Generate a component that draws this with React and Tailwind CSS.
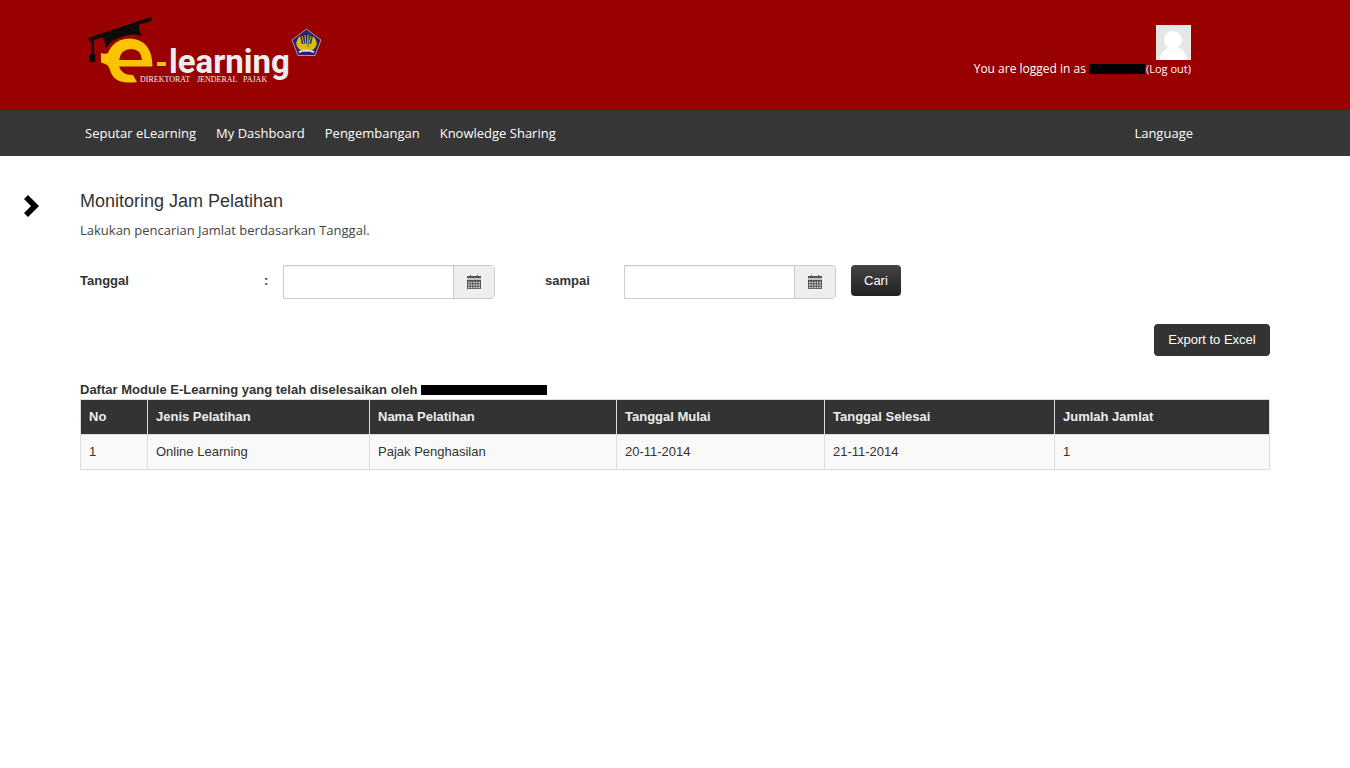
import React, { useState } from "react";

const menu = [
  "Seputar eLearning",
  "My Dashboard",
  "Pengembangan",
  "Knowledge Sharing",
];

const columns = [
  { title: "No", width: "w-[67px]" },
  { title: "Jenis Pelatihan", width: "w-[222px]" },
  { title: "Nama Pelatihan", width: "w-[247px]" },
  { title: "Tanggal Mulai", width: "w-[208px]" },
  { title: "Tanggal Selesai", width: "w-[230px]" },
  { title: "Jumlah Jamlat", width: "w-[215px]" },
];

const rows = [
  ["1", "Online Learning", "Pajak Penghasilan", "20-11-2014", "21-11-2014", "1"],
];

const App = () => {
  return (
    <div className="font-['Liberation_Sans',Arial,sans-serif] text-[13px] leading-[18px] text-[#333]">
      <Header />
      <Navbar />

      <div className="flex pt-[34px] pr-20">
        <aside className="w-20 shrink-0 pt-1 pl-6">
          <button aria-label="Show sidebar" className="block">
            <svg width="16" height="24" viewBox="0 0 16 24" aria-hidden="true">
              <path d="M0 5 4 1 15 12 4 23 0 19 7 12Z" fill="#000" />
            </svg>
          </button>
        </aside>

        <main className="min-w-0 flex-1">
          <h1 className="text-lg leading-[22px]">Monitoring Jam Pelatihan</h1>
          <p className="mt-[9px] font-['Open_Sans',sans-serif] text-[#444]">
            Lakukan pencarian Jamlat berdasarkan Tanggal.
          </p>
          <SearchForm />

          <div className="mt-[25px] flex justify-end">
            <button className="h-8 min-w-[116px] rounded bg-[#333] px-[13px] text-white">
              Export to Excel
            </button>
          </div>

          <ModuleTable />
        </main>
      </div>
    </div>
  );
};

const Header = () => {
  return (
    <header className="flex h-[110px] items-start justify-between bg-[#990000] pr-[159px] pl-20">
      <a href="#" className="mt-[10px]" aria-label="e-learning">
        <Logo />
      </a>

      <div className="mt-[25px] flex flex-col items-end font-['Open_Sans',sans-serif] text-[11px] text-white">
        <svg width="35" height="35" viewBox="0 0 35 35" aria-hidden="true">
          <path fill="#e6e6e6" d="M0 0h35v35H0z" />
          <circle cx="17" cy="15" r="9" fill="#fff" />
          <path d="M4 35c0-6 4-11 9-12h9c5 1 9 6 9 12z" fill="#fff" />
        </svg>
        <div className="flex items-center whitespace-pre">
          <span className="text-xs">You are logged in as </span>
          <span className="mr-px h-[10px] w-14 bg-black" />
          <span>
            (<a href="#">Log out</a>)
          </span>
        </div>
      </div>
    </header>
  );
};

const Navbar = () => {
  return (
    <nav className="flex h-[46px] items-center justify-between bg-[#363636] pr-[157px] pl-[85px] font-['Open_Sans',sans-serif] text-white">
      <div className="flex gap-5">
        {menu.map((item) => (
          <a href="#" key={item}>
            {item}
          </a>
        ))}
      </div>
      <a href="#">Language</a>
    </nav>
  );
};

const SearchForm = () => {
  const [from, setFrom] = useState("");
  const [to, setTo] = useState("");

  return (
    <form
      className="mt-[26px] flex items-start"
      onSubmit={(e) => e.preventDefault()}
    >
      <label htmlFor="from" className="mt-[7px] w-[184px] font-bold">
        Tanggal
      </label>
      <span className="mt-[7px] w-[19px] font-bold">:</span>
      <DateField id="from" value={from} onChange={setFrom} />
      <label htmlFor="to" className="mt-[7px] ml-[50px] w-[79px] font-bold">
        sampai
      </label>
      <DateField id="to" value={to} onChange={setTo} />
      <button className="ml-[15px] h-[31px] rounded bg-linear-to-b from-[#444] to-[#222] px-[13px] text-white">
        Cari
      </button>
    </form>
  );
};

const DateField = ({ id, value, onChange }) => {
  return (
    <div className="flex h-[34px] w-[212px] overflow-hidden rounded-r border border-[#ccc]">
      <input
        id={id}
        type="text"
        value={value}
        onChange={(e) => onChange(e.target.value)}
        className="min-w-0 flex-1 bg-white px-3 shadow-[inset_0_1px_1px_rgba(0,0,0,0.075)] outline-none"
      />
      <button
        type="button"
        aria-label="Pick a date"
        className="grid w-[41px] place-items-center border-l border-[#ccc] bg-[#eee]"
      >
        <CalendarIcon />
      </button>
    </div>
  );
};

const CalendarIcon = () => {
  return (
    <svg width="14" height="14" viewBox="0 0 14 14" aria-hidden="true">
      <path d="M0 1h3V0h1v1h6V0h1v1h3v2H0z" fill="#555" />
      <path d="M0 3h14v2H0z" fill="#c4c4c8" />
      <path d="M0 5h14v9H0z" fill="#555" />
      <path
        d="M1 7.500h12M1 10h12M1 12.500h12"
        stroke="#ddd"
        strokeWidth="1.500"
        strokeDasharray="1.600 1"
      />
    </svg>
  );
};

const ModuleTable = () => {
  return (
    <section className="mt-[25px]">
      <div className="flex items-center whitespace-pre font-bold">
        Daftar Module E-Learning yang telah diselesaikan oleh{" "}
        <span className="h-[10px] w-[126px] bg-black" />
      </div>
      <table className="w-full border-collapse text-left">
        <thead>
          <tr className="bg-[#333] text-[#eee]">
            {columns.map((col) => (
              <th
                key={col.title}
                className={`border border-[#ddd] p-2 font-bold ${col.width}`}
              >
                {col.title}
              </th>
            ))}
          </tr>
        </thead>
        <tbody>
          {rows.map((row) => (
            <tr key={row[0]} className="bg-[#f9f9f9]">
              {row.map((cell, i) => (
                <td key={i} className="border border-[#ddd] p-2">
                  {cell}
                </td>
              ))}
            </tr>
          ))}
        </tbody>
      </table>
    </section>
  );
};

const Logo = () => {
  return (
    <svg width="250" height="80" viewBox="80 10 250 80">
      {/* graduation cap */}
      <path d="M88 38 151 17l1 3.500L90 41.500Z" fill="#0b0b0b" />
      <path
        d="M102 37 139 25q0 7 3 11-8-3-18 0-12 3-18 12-1-7-4-11Z"
        fill="#0b0b0b"
      />
      <path d="M91.500 39h2.500v14l1.500 3-.500 6h-5l-.500-6 2-3Z" fill="#0b0b0b" />

      {/* e- */}
      <path
        fillRule="evenodd"
        d="M101 53q4 1.500 7 0 6-14.500 22-14.500 22 1 22.500 28H119q3 9 14 8.500l4 7q-6 1-14 0-8-1-12-9-2-7-4-8-3-2-6-2.500ZM119 60h23q-1-11-11-11-10 0-12 11Z"
        fill="#fac300"
      />
      <path d="M157 62h9v4h-9z" fill="#fac300" />

      <text
        x="169"
        y="73"
        fill="#eee"
        className="font-['Roboto','Liberation_Sans',sans-serif] text-[33px] font-bold"
      >
        learning
      </text>
      <g
        fill="#eee"
        className="font-['Liberation_Serif',serif] text-[8px]"
      >
        <text x="140" y="82">DIREKTORAT</text>
        <text x="197" y="82">JENDERAL</text>
        <text x="243" y="82">PAJAK</text>
      </g>

      {/* ministry emblem */}
      <path
        d="m306.500 29 14.500 11-6 15.500h-17L292 40Z"
        fill="#29236d"
        stroke="#a79aa8"
      />
      <path
        d="M300 36q-7 7-1 13 7 5 15 0 6-6-1-13l-2 8h-9Z"
        fill="#e2b911"
      />
      <path d="m302 36 3 12m0-13 1 13m2-13-1 13m4-12-3 12" stroke="#d9b21c" />
      <path d="m309 34-1 13" stroke="#2b8a57" />
      <path d="M299 52q7-3 15 0" stroke="#ddd" strokeWidth="2" fill="none" />
    </svg>
  );
};

export default App;
